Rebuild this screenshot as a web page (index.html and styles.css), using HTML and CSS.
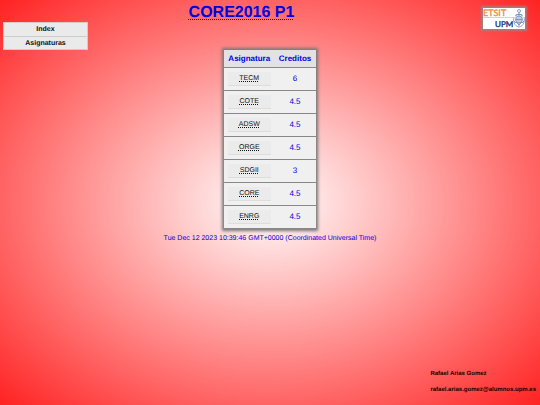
FILE: index.html
```html
<!DOCTYPE html>
<html lang="es">
<head>
<meta charset="utf-8">
<title>CORE2016 P1</title>
<link rel="stylesheet" href="styles.css">
</head>
<body>
<header class="top">
  <div class="top-main">
    <h1 class="title"><abbr>CORE2016 P1</abbr></h1>
    <nav class="menu">
      <a class="menu-link" href="#index">Index</a>
      <a class="menu-link" href="#asignaturas">Asignaturas</a>
    </nav>
  </div>
  <svg class="logo" viewBox="0 0 42 21" role="img" aria-label="ETSIT UPM">
    <path d="M0 9.500H30" stroke="#a9a4a4" stroke-width=".5"/>
    <text class="logo-etsit" x="0" y="8">ETSIT</text>
    <text class="logo-upm" x="12" y="19">UPM</text>
    <g fill="none" stroke="#7288b5" stroke-width=".8">
      <circle cx="36" cy="3" r="1.500"/>
      <path d="M36 4.500V18M33 6.500H39M32 8L36 6L40 8"/>
      <circle cx="36" cy="11.500" r="3.500" fill="#c3cde2"/>
      <path d="M31 9C30 13 31 18 36 19C41 18 42 13 41 9M33 11.500H39M33 14L36 17L39 14M31 13L33 15M41 13L39 15"/>
    </g>
  </svg>
</header>
<main class="content">
  <table class="subjects">
    <thead>
      <tr><th scope="col">Asignatura</th><th scope="col">Creditos</th></tr>
    </thead>
    <tbody>
      <tr><td><button class="subject" type="button"><abbr>TECM</abbr></button></td><td>6</td></tr>
      <tr><td><button class="subject" type="button"><abbr>COTE</abbr></button></td><td>4.5</td></tr>
      <tr><td><button class="subject" type="button"><abbr>ADSW</abbr></button></td><td>4.5</td></tr>
      <tr><td><button class="subject" type="button"><abbr>ORGE</abbr></button></td><td>4.5</td></tr>
      <tr><td><button class="subject" type="button"><abbr>SDGII</abbr></button></td><td>3</td></tr>
      <tr><td><button class="subject" type="button"><abbr>CORE</abbr></button></td><td>4.5</td></tr>
      <tr><td><button class="subject" type="button"><abbr>ENRG</abbr></button></td><td>4.5</td></tr>
    </tbody>
  </table>
  <p class="date">Tue Dec 12 2023 10:39:46 GMT+0000 (Coordinated Universal Time)</p>
</main>
<footer class="author">
  <p>Rafael Arias Gomez</p>
  <p>rafael.arias.gomez@alumnos.upm.es</p>
</footer>
</body>
</html>
```
FILE: styles.css
```css
* {
  box-sizing: border-box;
}

body {
  margin: 0;
  min-height: 100vh;
  display: flex;
  flex-direction: column;
  font-family: "Liberation Sans", Arial, sans-serif;
  font-size: 8px;
  color: #0000e0;
  text-rendering: geometricPrecision;
  background: radial-gradient(ellipse farthest-corner at center, #fff 0%, #f22 100%);
}

.top {
  display: flex;
  align-items: flex-start;
}

.top-main {
  flex: 1;
}

.title {
  margin: 0;
  padding-top: 4px;
  height: 22px;
  font-size: 16px;
  line-height: 18px;
  text-align: center;
}

.title abbr {
  text-decoration: underline dotted 1px;
  text-underline-offset: 2px;
}

.menu {
  width: 85px;
  margin-left: 3px;
  border: 1px solid #d8c8c8;
}

.menu-link {
  display: block;
  height: 13px;
  background: #eaeaea;
  color: #111;
  font-size: 7px;
  font-weight: bold;
  line-height: 13px;
  text-align: center;
  text-decoration: none;
}

.menu-link + .menu-link {
  border-top: 1px solid #ccc;
}

.logo {
  width: 42px;
  height: 21px;
  margin: 8px 15px 0 0;
  background: #fff;
  box-shadow: 0 0 2px 2px #a08080;
}

.logo text {
  font-family: Lato, "Liberation Sans", sans-serif;
  stroke-width: 0.4px;
}

.logo-etsit {
  font-size: 9px;
  fill: #f0903c;
  stroke: #f0903c;
}

.logo-upm {
  font-size: 8px;
  fill: #24407c;
  stroke: #24407c;
}

.content {
  display: flex;
  flex-direction: column;
  align-items: center;
}

.subjects {
  border-collapse: collapse;
  background: #f0f0f0;
  box-shadow: 0 0 3px 2px #777;
  text-align: center;
}

.subjects th,
.subjects td {
  padding: 0 4px;
  border-bottom: 1px solid #888;
}

.subjects th {
  height: 17px;
  background: #e2e2e2;
}

.subjects td {
  height: 23px;
}

.subjects td + td,
.subjects th + th {
  padding-right: 5px;
}

.subject {
  display: block;
  width: 43px;
  height: 14px;
  padding: 0;
  border: 0;
  border-bottom: 1px solid #ddd;
  background: #ebebeb;
  color: #111;
  font-family: inherit;
  font-size: 7px;
  line-height: 13px;
  text-rendering: inherit;
}

.subject abbr {
  text-decoration: underline dotted 1px;
  text-underline-offset: 1px;
  text-decoration-skip-ink: none;
}

.date {
  margin: 6px 0 0;
  font-size: 7px;
  line-height: 8px;
}

.author {
  margin: auto 4px 11px auto;
  color: #200;
  font-size: 6px;
  font-weight: bold;
  line-height: 8px;
}

.author p {
  margin: 8px 0 0;
}
```
